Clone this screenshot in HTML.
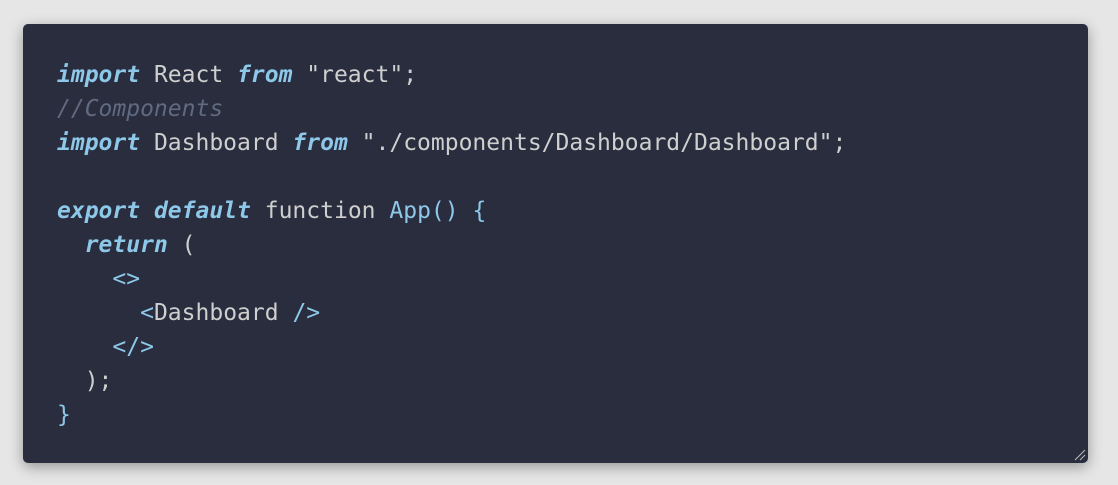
<!DOCTYPE html>
<html><head><style>
html,body{margin:0;padding:0;}
body{width:1118px;height:485px;background:#e6e6e6;position:relative;overflow:hidden;}
.card{position:absolute;left:23px;top:24px;width:1065px;height:439px;background:#292d3e;border-radius:5px;box-shadow:0 4px 14px rgba(0,0,0,0.35);}
pre{margin:0;position:absolute;left:34px;top:34px;font-family:"DejaVu Sans Mono","Liberation Mono",monospace;font-size:23px;line-height:34px;color:#cfcfcf;}
.k{color:#8ec8e8;font-style:italic;font-weight:bold;}
.c{color:#606a80;font-style:italic;}
.b{color:#8ec8e8;}
.grip{position:absolute;right:2px;bottom:2px;}
</style></head><body>
<div class="card">
<pre><span class="k">import</span> React <span class="k">from</span> "react";
<span class="c">//Components</span>
<span class="k">import</span> Dashboard <span class="k">from</span> "./components/Dashboard/Dashboard";

<span class="k">export</span> <span class="k">default</span> function <span class="b">App() {</span>
  <span class="k">return</span> (
    <span class="b">&lt;&gt;</span>
      <span class="b">&lt;</span>Dashboard <span class="b">/&gt;</span>
    <span class="b">&lt;/&gt;</span>
  );
<span class="b">}</span></pre>
<svg class="grip" width="12" height="12" viewBox="0 0 12 12"><path d="M1 11L11 1M6 11L11 6" stroke="#bbb" stroke-width="1"/></svg>
</div>
</body></html>
